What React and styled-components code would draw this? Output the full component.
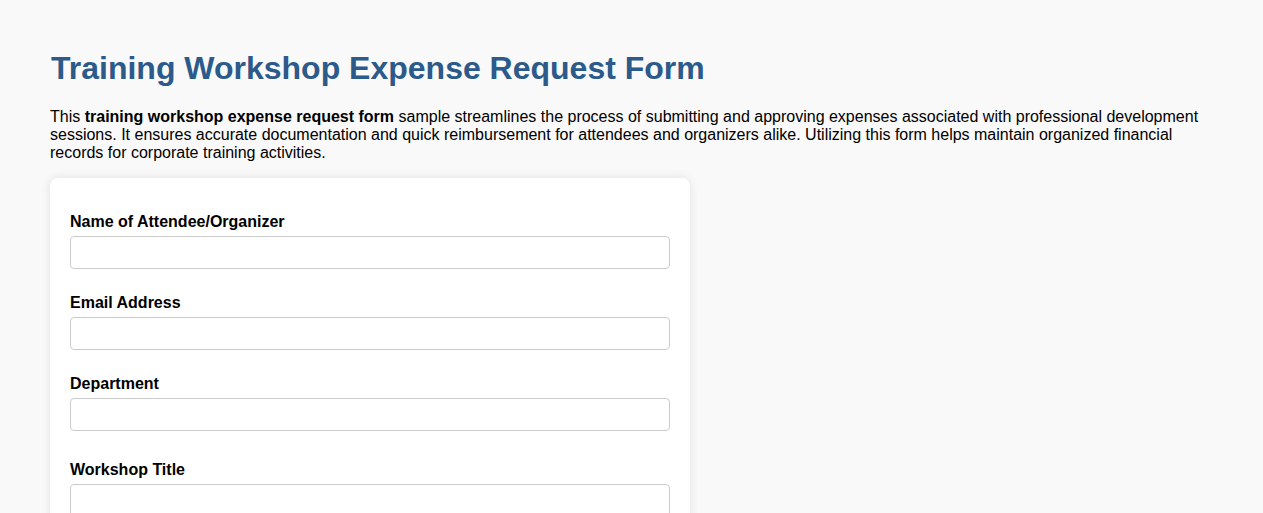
import React from 'react';
import styled, { createGlobalStyle } from 'styled-components';

const GlobalStyle = createGlobalStyle`
  body {
    margin: 0;
    background-color: #f9f9f9;
    font-family: "Liberation Sans", Arial, sans-serif;
    color: #000;
  }
`;

const Page = styled.div`
  padding: 50px 50px 40px 50px;
`;

const Title = styled.h1`
  margin: 0 0 21px 1px;
  font-size: 32px;
  font-weight: bold;
  color: #2c5a8a;
`;

const Intro = styled.p`
  margin: 0 0 16px 0;
  font-size: 16px;
  line-height: 18px;
`;

const Card = styled.form`
  width: 600px;
  padding: 35px 20px 20px 20px;
  background-color: #ffffff;
  border-radius: 8px;
  box-shadow: 0 0 10px rgba(0, 0, 0, 0.1);
`;

const Field = styled.div`
  margin-top: ${(p) => p.$top || 0}px;
  margin-bottom: 25px;
`;

const Label = styled.label`
  display: block;
  margin-bottom: 5px;
  font-size: 16px;
  font-weight: bold;
  line-height: 18px;
`;

const Input = styled.input`
  display: block;
  box-sizing: border-box;
  width: 100%;
  height: 33px;
  padding: 8px;
  border: 1px solid #cccccc;
  border-radius: 4px;
  font-family: "Liberation Sans", Arial, sans-serif;
  font-size: 16px;
`;

const fields = [
  { id: 'name', label: 'Name of Attendee/Organizer' },
  { id: 'email', label: 'Email Address', type: 'email' },
  { id: 'department', label: 'Department' },
  { id: 'workshop', label: 'Workshop Title', top: 30 },
  { id: 'date', label: 'Workshop Date', type: 'date' },
];

function App() {
  return (
    <Page>
      <GlobalStyle />
      <Title>Training Workshop Expense Request Form</Title>
      <Intro>
        This <strong>training workshop expense request form</strong> sample streamlines the
        process of submitting and approving expenses associated with professional development
        sessions. It ensures accurate documentation and quick reimbursement for attendees and
        organizers alike. Utilizing this form helps maintain organized financial records for
        corporate training activities.
      </Intro>
      <Card onSubmit={(e) => e.preventDefault()}>
        {fields.map((f) => (
          <Field key={f.id} $top={f.top}>
            <Label htmlFor={f.id}>{f.label}</Label>
            <Input id={f.id} type={f.type || 'text'} />
          </Field>
        ))}
      </Card>
    </Page>
  );
}

export default App;
